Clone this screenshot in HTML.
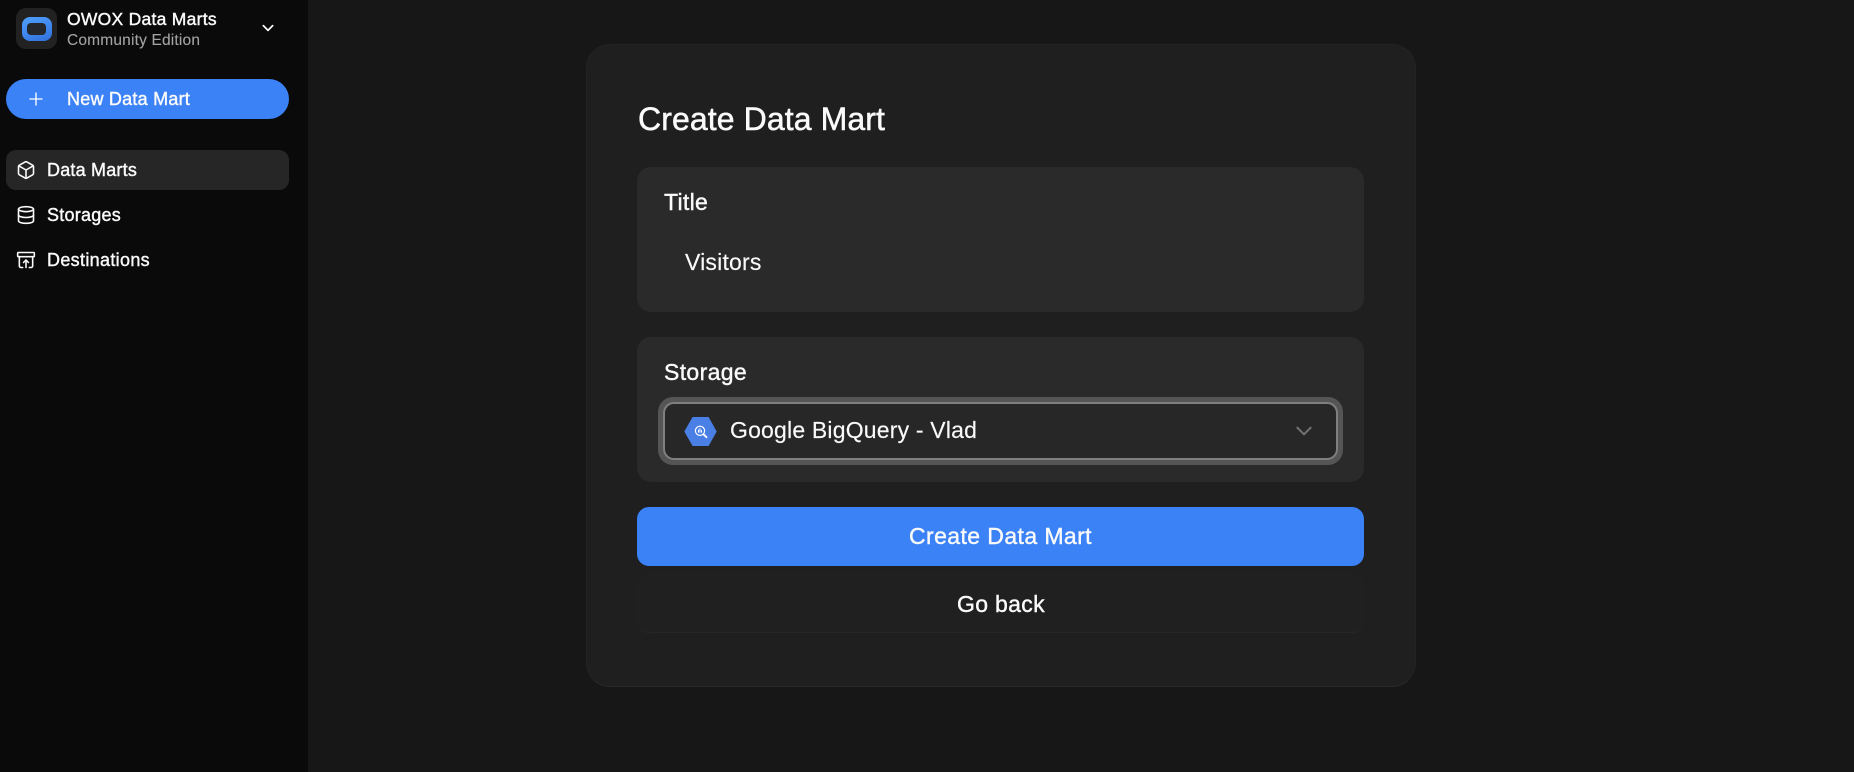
<!DOCTYPE html>
<html lang="en"><head><meta charset="utf-8"><title>Create Data Mart</title>
<style>
*{box-sizing:border-box;margin:0;padding:0}
html,body{width:1854px;height:772px;overflow:hidden;background:#171717}
body{position:relative;font-family:"Liberation Sans",sans-serif;color:#fafafa}
.a{position:absolute}
.t{position:absolute;white-space:nowrap;line-height:1;-webkit-text-stroke:.4px currentColor}
.sb{left:0;top:0;width:308px;height:772px;background:#0a0a0a}
.card{left:586px;top:44px;width:830px;height:643px;background:#1f1f1f;border-radius:24px;border:1px solid #232323;border-bottom-color:#2a2a2a}
.panel{left:637px;width:727px;background:#2a2a2a;border-radius:14px}
svg{position:absolute;display:block;fill:none;stroke:currentColor;stroke-linecap:round;stroke-linejoin:round}
</style></head><body>
<div class="a sb"></div>
<div class="a" style="left:16px;top:8px;width:41px;height:41px;border-radius:10px;background:#222"></div>
<div class="a" style="left:22px;top:17px;width:30px;height:24px;border-radius:8px;background:linear-gradient(160deg,#4f9ff7,#3f86ee 55%,#2f6fd6)"></div>
<div class="a" style="left:27px;top:23px;width:19px;height:12px;border-radius:4px;background:#24272c"></div>
<div class="t" style="left:67px;top:11px;font-size:17.5px;letter-spacing:.27px">OWOX Data Marts</div>
<div class="t" style="left:67px;top:33px;font-size:15.5px;letter-spacing:.18px;color:#a3a3a3;-webkit-text-stroke:.1px #a3a3a3">Community Edition</div>
<svg style="left:260px;top:20px;color:#fafafa" width="16" height="16" viewBox="0 0 24 24" stroke-width="2.6"><path d="m5 8.500 7 7 7-7"/></svg>

<div class="a" style="left:6px;top:79px;width:283px;height:40px;border-radius:20px;background:#3b82f6"></div>
<svg style="left:27px;top:90px;color:#fff" width="18" height="18" viewBox="0 0 24 24" stroke-width="1.800"><path d="M12 4v16M4 12h16"/></svg>
<div class="t" style="left:67px;top:90px;font-size:18px;letter-spacing:.23px">New Data Mart</div>

<div class="a" style="left:6px;top:150px;width:283px;height:40px;border-radius:10px;background:#262626"></div>
<svg style="left:16px;top:160px" width="20" height="20" viewBox="0 0 24 24" stroke-width="1.900"><path d="M21 8a2 2 0 0 0-1-1.730l-7-4a2 2 0 0 0-2 0l-7 4A2 2 0 0 0 3 8v8a2 2 0 0 0 1 1.730l7 4a2 2 0 0 0 2 0l7-4A2 2 0 0 0 21 16Z"/><path d="m3.300 7 8.700 5 8.700-5"/><path d="M12 22V12"/></svg>
<div class="t" style="left:47px;top:161px;font-size:18px;letter-spacing:.2px">Data Marts</div>
<svg style="left:16px;top:205px" width="20" height="20" viewBox="0 0 24 24" stroke-width="1.900"><ellipse cx="12" cy="5" rx="9" ry="3"/><path d="M3 5V19A9 3 0 0 0 21 19V5"/><path d="M3 12A9 3 0 0 0 21 12"/></svg>
<div class="t" style="left:47px;top:206px;font-size:18px;letter-spacing:.25px">Storages</div>
<svg style="left:16px;top:250px" width="20" height="20" viewBox="0 0 24 24" stroke-width="1.900"><rect x="2" y="3" width="20" height="5" rx="1"/><path d="M4 8v11a2 2 0 0 0 2 2h2"/><path d="M20 8v11a2 2 0 0 1-2 2h-2"/><path d="m9 15 3-3 3 3"/><path d="M12 12v9"/></svg>
<div class="t" style="left:47px;top:251px;font-size:18px;letter-spacing:.33px">Destinations</div>

<div class="a card"></div>
<div class="t" style="left:638px;top:103px;font-size:32px;letter-spacing:.1px;-webkit-text-stroke:.5px #fafafa">Create Data Mart</div>

<div class="a panel" style="top:167px;height:145px"></div>
<div class="t" style="left:664px;top:191px;font-size:23px;letter-spacing:.3px">Title</div>
<div class="t" style="left:685px;top:251px;font-size:23px;letter-spacing:.2px;-webkit-text-stroke:.15px #fafafa">Visitors</div>

<div class="a panel" style="top:337px;height:145px"></div>
<div class="t" style="left:664px;top:361px;font-size:23px;letter-spacing:.35px">Storage</div>
<div class="a" style="left:658px;top:397px;width:685px;height:68px;border-radius:15px;background:#555"></div>
<div class="a" style="left:663px;top:402px;width:675px;height:58px;border-radius:11px;background:#272727;border:2px solid #7f7f7f"></div>
<svg style="left:684px;top:416px;stroke:none" width="33" height="31" viewBox="0 0 33 31"><path fill="#4a7fe6" d="M.3 15.500 8.600 1h16l8.100 14.500-8.100 14.500h-16Z"/><g stroke="#fff" fill="none" stroke-width="1.200"><circle cx="16" cy="14.800" r="4.600"/><path d="m19.400 18.200 3.100 3" stroke-width="1.800"/><path d="M14.500 14v2.300M16 12.500v3.800M17.500 14.500v1.800" stroke-width="1"/></g></svg>
<div class="t" style="left:730px;top:419px;font-size:23px;letter-spacing:.19px;-webkit-text-stroke:.15px #fafafa">Google BigQuery - Vlad</div>
<svg style="left:1294px;top:421px;color:#737373" width="20" height="20" viewBox="0 0 24 24" stroke-width="2.400"><path d="m4 8 8 8 8-8"/></svg>

<div class="a" style="left:637px;top:507px;width:727px;height:59px;border-radius:12px;background:#3b82f6"></div>
<div class="t" style="left:909px;top:525px;font-size:23px;letter-spacing:.41px">Create Data Mart</div>
<div class="a" style="left:637px;top:573px;width:727px;height:60px;border-radius:12px;background:#202020;border-bottom:1px solid #262626"></div>
<div class="t" style="left:957px;top:593px;font-size:23px;letter-spacing:.33px">Go back</div>
</body></html>
